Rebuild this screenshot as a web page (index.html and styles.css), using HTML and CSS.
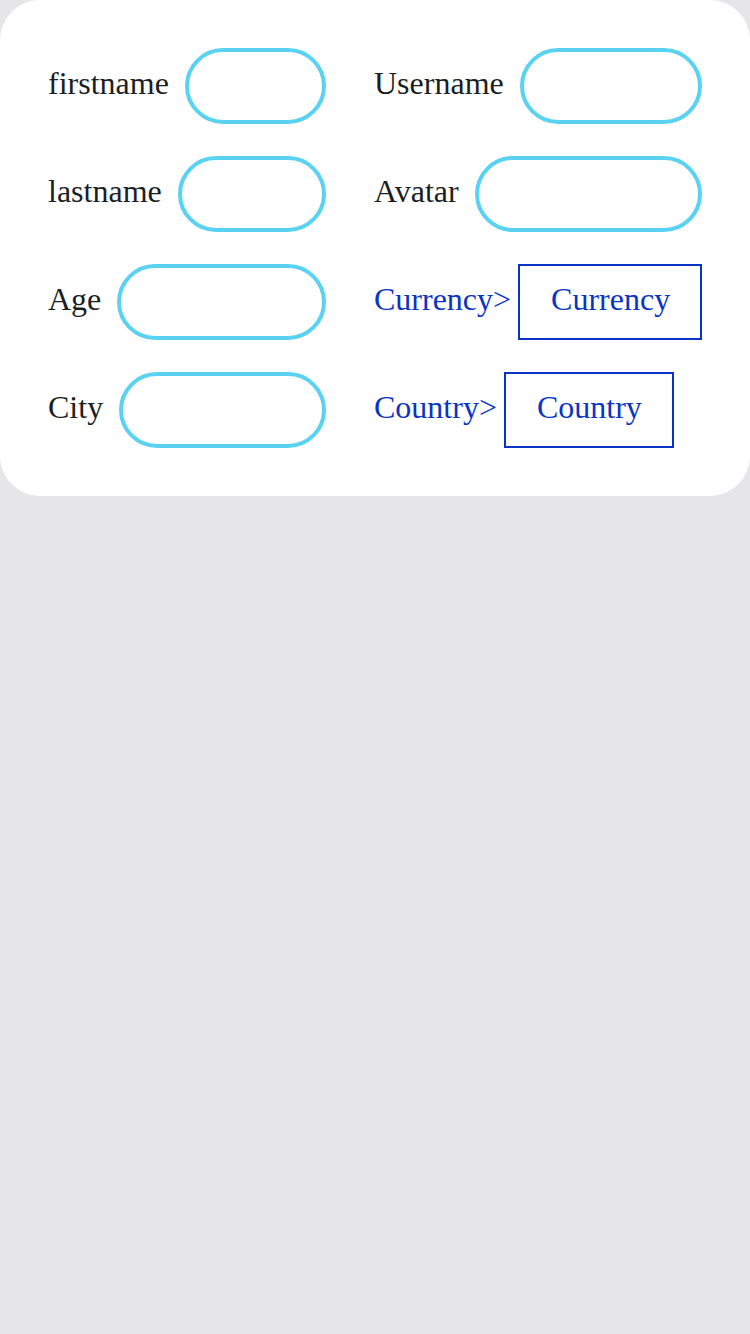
FILE: index.html
```html
<!DOCTYPE html>
<html>
<head>
<meta charset="utf-8">
<link rel="stylesheet" href="styles.css">
</head>
<body>
<div class="card">
  <div class="form">
    <div class="cell"><span class="label">firstname</span><input class="field" type="text"></div>
    <div class="cell"><span class="label">Username</span><input class="field" type="text"></div>
    <div class="cell"><span class="label">lastname</span><input class="field" type="text"></div>
    <div class="cell"><span class="label">Avatar</span><input class="field" type="text"></div>
    <div class="cell"><span class="label">Age</span><input class="field" type="text"></div>
    <div class="cell"><span class="label link">Currency&gt;</span><span class="picker">Currency</span></div>
    <div class="cell"><span class="label">City</span><input class="field" type="text"></div>
    <div class="cell"><span class="label link">Country&gt;</span><span class="picker">Country</span></div>
  </div>
</div>
</body>
</html>
```
FILE: styles.css
```css
html, body {
  margin: 0;
  padding: 0;
}
body {
  width: 750px;
  height: 1334px;
  background: #e6e6e8;
  font-family: "Liberation Serif", "Times New Roman", serif;
}
.card {
  background: #ffffff;
  border-radius: 40px;
  padding: 48px;
  box-sizing: border-box;
  width: 750px;
  height: 496px;
}
.form {
  display: grid;
  grid-template-columns: 278px 328px;
  column-gap: 48px;
  row-gap: 32px;
}
.cell {
  display: flex;
  align-items: center;
  height: 76px;
}
.label {
  font-size: 32px;
  color: #1b1f23;
  white-space: nowrap;
  padding-bottom: 6px;
}
.label.link {
  color: #0a34c4;
}
.field {
  flex: 1;
  min-width: 0;
  margin: 0 0 0 16px;
  height: 76px;
  box-sizing: border-box;
  border: 4px solid #5ad2f2;
  border-radius: 38px;
  background: #ffffff;
  outline: none;
  padding: 0 20px;
  font-family: inherit;
  font-size: 32px;
}
.picker {
  margin-left: 7px;
  height: 76px;
  box-sizing: border-box;
  border: 2px solid #0a34c4;
  padding: 0 30px 6px 31px;
  display: flex;
  align-items: center;
  font-size: 32px;
  color: #0a34c4;
  white-space: nowrap;
}
```
